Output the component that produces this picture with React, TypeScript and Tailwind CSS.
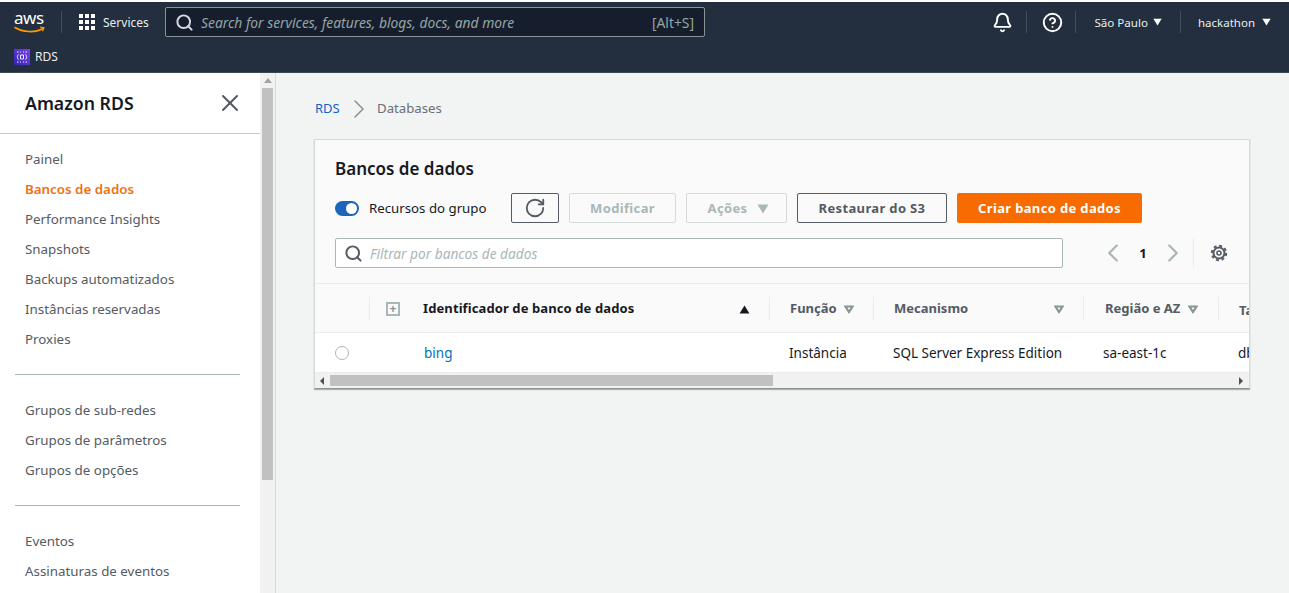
import { ChevronLeft, ChevronRight, CircleHelp, RotateCw, Search, Bell, X } from "lucide-react";

const nav1 = ["Painel", "Bancos de dados", "Performance Insights", "Snapshots", "Backups automatizados", "Instâncias reservadas", "Proxies"];
const nav2 = ["Grupos de sub-redes", "Grupos de parâmetros", "Grupos de opções"];
const nav3 = ["Eventos", "Assinaturas de eventos"];

function Caret({ className }: { className?: string }) {
    return (
        <svg viewBox="0 0 12 10" className={className} fill="currentColor">
            <path d="M0.5 0.5h11L6 9.5z" />
        </svg>
    );
}

function OutlineCaret() {
    return (
        <svg viewBox="0 0 12 10" className="w-[10px] h-[9px] shrink-0 text-[#879596]" fill="none" stroke="currentColor" strokeWidth="2.600">
            <path d="M1.8 1.4h8.400L6 8z" />
        </svg>
    );
}

function Divider() {
    return <div className="w-px h-6 bg-[#eaeded] shrink-0" />;
}

function NavList({ items }: { items: string[] }) {
    return (
        <ul>
            {items.map((item) => (
                <li
                    key={item}
                    className={
                        item === "Bancos de dados"
                            ? "h-[30px] pl-[25px] flex items-center text-[13.35px] font-semibold text-[#ec7211]"
                            : "h-[30px] pl-[25px] flex items-center text-[13.35px] text-[#545b64]"
                    }
                >
                    {item}
                </li>
            ))}
        </ul>
    );
}

function TopBar() {
    return (
        <header className="bg-[#232f3e] h-[71px] mt-[2px] border-b border-[#3b4654] text-[#eaeded] shrink-0">
            <div className="h-[40px] flex items-center">
                <div className="w-[31px] ml-[14px] relative h-[24px] text-white">
                    <span className="absolute left-0 -top-[3px] text-[17px] leading-[22px] tracking-[-0.5px]">aws</span>
                    <svg viewBox="0 0 31 8" className="absolute left-0 top-[16px] w-[31px] h-[8px]" fill="none">
                        <path d="M1 1.5c8 5 20 5.500 28 1" stroke="#f90" strokeWidth="1.600" strokeLinecap="round" />
                        <path d="M26 1l4 .8-1.500 3.400" stroke="#f90" strokeWidth="1.200" />
                    </svg>
                </div>
                <div className="w-px h-[22px] bg-[#414d5c] ml-[16px]" />
                <div className="grid grid-cols-3 gap-[2px] w-[16px] ml-[17px]">
                    {[...Array(9)].map((_, i) => (
                        <span key={i} className="w-[4px] h-[4px] bg-white" />
                    ))}
                </div>
                <span className="ml-[8px] pt-[1px] text-[12px] w-[45px]">Services</span>
                <div className="ml-[17px] w-[540px] h-[30px] bg-[#161e2d] border border-[#879596] rounded-[2px] flex items-center pl-[9px] pr-[10px]">
                    <Search className="w-[19px] h-[19px] text-[#d5dbdb]" strokeWidth={2.500} />
                    <span className="ml-[7px] pt-[2px] flex-1 italic text-[13.85px] text-[#95a5a6]">Search for services, features, blogs, docs, and more</span>
                    <span className="pt-[2px] text-[13.85px] text-[#95a5a6]">[Alt+S]</span>
                </div>
                <div className="ml-auto flex items-center">
                    <Bell className="w-[21px] h-[21px] text-white" strokeWidth={2.200} />
                    <div className="w-px h-[22px] bg-[#414d5c] ml-[13px]" />
                    <CircleHelp className="w-[21px] h-[21px] ml-[15px] text-white" strokeWidth={2.200} />
                    <div className="w-px h-[22px] bg-[#414d5c] ml-[12px]" />
                    <span className="ml-[18px] pt-[1px] text-[11.6px]">São Paulo</span>
                    <Caret className="w-[9px] h-[8px] ml-[5px] text-white" />
                    <div className="w-px h-[22px] bg-[#414d5c] ml-[18px]" />
                    <span className="ml-[17px] pt-[1px] text-[11.5px]">hackathon</span>
                    <Caret className="w-[9px] h-[8px] ml-[7px] mr-[18px] text-white" />
                </div>
            </div>
            <div className="h-[30px] flex items-center pl-[14px]">
                <svg viewBox="0 0 16 16" className="w-[16px] h-[16px]">
                    <defs>
                        <linearGradient id="rds" x1="0" y1="1" x2="1" y2="0">
                            <stop offset="0" stopColor="#2e27ad" />
                            <stop offset="1" stopColor="#7d3ff0" />
                        </linearGradient>
                    </defs>
                    <rect width="16" height="16" fill="url(#rds)" />
                    <path d="M4.500 5.500c-1 0-.5 2-1.500 2.500 1 .5.500 2.500 1.500 2.500 M11.500 5.500c1 0 .5 2 1.500 2.500-1 .5-.5 2.500-1.500 2.500 M6.500 6h3v4h-3z M3 3h1.500 M6 3h1 M9 3h1 M11.500 3H13 M3 13h1.500 M6 13h1 M9 13h1 M11.500 13H13" fill="none" stroke="#fff" strokeWidth="0.900" />
                </svg>
                <span className="ml-[5px] text-[12px]">RDS</span>
            </div>
        </header>
    );
}

function SideBar() {
    return (
        <aside className="w-[276px] shrink-0 flex bg-white border-r border-[#d5dbdb]">
            <div className="w-[260px] shrink-0">
                <div className="h-[61px] pl-[25px] pr-[16px] flex items-center justify-between border-b border-[#c8cccc]">
                    <h2 className="text-[17.7px] font-semibold text-[#16191f]">Amazon RDS</h2>
                    <X className="w-[28px] h-[28px] text-[#545b64]" strokeWidth={1.700} />
                </div>
                <div className="pt-[10px]">
                    <NavList items={nav1} />
                    <div className="ml-[15px] w-[225px] h-px bg-[#aab7b8] mt-[20px] mb-[20px]" />
                    <NavList items={nav2} />
                    <div className="ml-[15px] w-[225px] h-px bg-[#aab7b8] mt-[20px] mb-[20px]" />
                    <NavList items={nav3} />
                </div>
            </div>
            <div className="flex-1 bg-[#f1f1f1] flex flex-col items-center pt-[5px] px-[2px]">
                <div className="w-0 h-0 border-x-[4px] border-x-transparent border-b-[5px] border-b-[#a3a3a3]" />
                <div className="w-full h-[392px] bg-[#c1c1c1] mt-[5px]" />
            </div>
        </aside>
    );
}

function Toolbar() {
    return (
        <div className="flex items-center mt-[12px] pl-[20px]">
            <div className="w-[24px] h-[15px] rounded-full bg-[#1d64bd] flex items-center justify-end pr-[2px]">
                <span className="w-[11px] h-[11px] rounded-full bg-white" />
            </div>
            <span className="ml-[10px] pt-[2px] w-[142px] text-[13.25px] text-[#16191f]">Recursos do grupo</span>
            <button className="w-[48px] h-[30px] border border-[#545b64] rounded-[2px] flex items-center justify-center">
                <RotateCw className="w-[22px] h-[22px] text-[#545b64]" strokeWidth={2} />
            </button>
            <button className="ml-[10px] pt-[2px] w-[107px] h-[30px] border border-[#d5dbdb] rounded-[2px] text-[13px] tracking-[0.35px] font-bold text-[#aab7b8]">Modificar</button>
            <button className="ml-[10px] pt-[2px] pl-[4px] w-[101px] h-[30px] border border-[#d5dbdb] rounded-[2px] text-[13px] tracking-[0.35px] font-bold text-[#aab7b8] flex items-center justify-center gap-[10px]">
                Ações
                <Caret className="w-[12px] h-[10px] text-[#aab7b8]" />
            </button>
            <button className="ml-[10px] pt-[2px] w-[150px] h-[30px] border border-[#545b64] rounded-[2px] text-[13px] tracking-[0.35px] font-bold text-[#545b64]">Restaurar do S3</button>
            <button className="ml-[10px] pt-[2px] w-[185px] h-[30px] rounded-[2px] bg-[#f76b00] text-[13px] tracking-[0.35px] font-bold text-white">Criar banco de dados</button>
        </div>
    );
}

function FilterRow() {
    return (
        <div className="flex items-center mt-[15px] pl-[20px] h-[30px]">
            <div className="w-[728px] h-[30px] shrink-0 bg-white border border-[#aab7b8] rounded-[2px] flex items-center pl-[8px]">
                <Search className="w-[19px] h-[19px] text-[#545b64]" strokeWidth={2.500} />
                <span className="ml-[7px] pt-[2px] italic text-[13.7px] text-[#aab7b8]">Filtrar por bancos de dados</span>
            </div>
            <ChevronLeft className="ml-[35px] w-[30px] h-[30px] shrink-0 text-[#aab7b8]" strokeWidth={1.800} />
            <span className="ml-[9px] pt-[2px] w-[12px] shrink-0 text-center text-[13px] font-bold text-[#16191f]">1</span>
            <ChevronRight className="ml-[9px] w-[30px] h-[30px] shrink-0 text-[#aab7b8]" strokeWidth={1.800} />
            <div className="w-px h-[30px] bg-[#eaeded] ml-[5px] shrink-0" />
            <svg viewBox="0 0 18 18" className="ml-[16px] w-[18px] h-[18px] shrink-0 text-[#545b64]" fill="none" stroke="currentColor">
                <circle cx="9" cy="9" r="5.500" strokeWidth="2" />
                <circle cx="9" cy="9" r="7.200" strokeWidth="2" strokeDasharray="2.900 2.750" />
                <circle cx="9" cy="9" r="2" strokeWidth="1.600" />
            </svg>
        </div>
    );
}

function HeadCell({ width, label, dark, children }: { width: string; label: string; dark?: boolean; children?: React.ReactNode }) {
    return (
        <div className={width}>
            <span className={dark ? "text-[13px] tracking-[0.1px] font-bold text-[#16191f]" : "text-[13px] font-bold text-[#545b64]"}>{label}</span>
            {children}
        </div>
    );
}

function DbTable() {
    return (
        <div className="mt-[15px] overflow-hidden">
            <div className="h-[50px] pt-[2px] flex items-center border-y border-[#eaeded] bg-[#fafafa] whitespace-nowrap">
                <div className="w-[54px] shrink-0" />
                <Divider />
                <div className="w-[53px] shrink-0 pl-[16px]">
                    <div className="w-[14px] h-[14px] border-2 border-[#aab7b8] flex items-center justify-center text-[#879596] text-[12px] font-bold leading-none">+</div>
                </div>
                <HeadCell width="w-[346px] shrink-0 flex items-center justify-between pr-[19px]" label="Identificador de banco de dados" dark>
                    <Caret className="w-[11px] h-[9px] rotate-180 text-[#16191f]" />
                </HeadCell>
                <Divider />
                <HeadCell width="w-[103px] shrink-0 pl-[20px] flex items-center gap-[7px]" label="Função">
                    <OutlineCaret />
                </HeadCell>
                <Divider />
                <HeadCell width="w-[209px] shrink-0 pl-[20px] pr-[19px] flex items-center justify-between" label="Mecanismo">
                    <OutlineCaret />
                </HeadCell>
                <Divider />
                <HeadCell width="w-[134px] shrink-0 pl-[21px] flex items-center gap-[8px]" label="Região e AZ">
                    <OutlineCaret />
                </HeadCell>
                <Divider />
                <HeadCell width="pl-[20px]" label="Tamanho" />
            </div>
            <div className="h-[39px] pt-[2px] flex items-center bg-white text-[13.5px] text-[#16191f] whitespace-nowrap">
                <div className="w-[109px] shrink-0 pl-[20px] -mt-[2px]">
                    <div className="w-[14px] h-[14px] rounded-full border border-[#aab7b8]" />
                </div>
                <span className="w-[365px] shrink-0 text-[#0073bb]">bing</span>
                <span className="w-[104px] shrink-0">Instância</span>
                <span className="w-[210px] shrink-0">SQL Server Express Edition</span>
                <span className="w-[135px] shrink-0">sa-east-1c</span>
                <span>db.t3.small</span>
            </div>
            <div className="h-[16px] flex items-center bg-[#f1f1f1] border-t border-[#eaeded]">
                <div className="w-0 h-0 ml-[5px] border-y-[4px] border-y-transparent border-r-[4px] border-r-[#505050]" />
                <div className="w-[443px] h-[11px] ml-[6px] bg-[#c1c1c1]" />
                <div className="w-0 h-0 ml-auto mr-[6px] border-y-[4px] border-y-transparent border-l-[4px] border-l-[#505050]" />
            </div>
        </div>
    );
}

export default function App() {
    return (
        <div className="h-[593px] w-[1289px] overflow-hidden bg-white flex flex-col font-['Noto_Sans',sans-serif]">
            <TopBar />
            <div className="flex flex-1 min-h-0">
                <SideBar />
                <main className="flex-1 bg-[#f2f3f3] pl-[38px] pr-[39px]">
                    <div className="h-[66px] pt-[6px] pl-[1px] flex items-center text-[13px]">
                        <span className="text-[#0f66c0] w-[26px]">RDS</span>
                        <ChevronRight className="w-[32px] h-[32px] ml-[2px] text-[#879596]" strokeWidth={1.200} />
                        <span className="ml-[2px] text-[13.2px] text-[#687078]">Databases</span>
                    </div>
                    <section className="w-[936px] bg-[#fafafa] border border-[#d5dbdb] border-b-[#879596] shadow-[0_1px_1px_rgba(0,28,36,0.3)]">
                        <h1 className="pt-[16px] pl-[20px] text-[17px] leading-[25px] font-semibold text-[#16191f]">Bancos de dados</h1>
                        <Toolbar />
                        <FilterRow />
                        <DbTable />
                    </section>
                </main>
            </div>
        </div>
    );
}
